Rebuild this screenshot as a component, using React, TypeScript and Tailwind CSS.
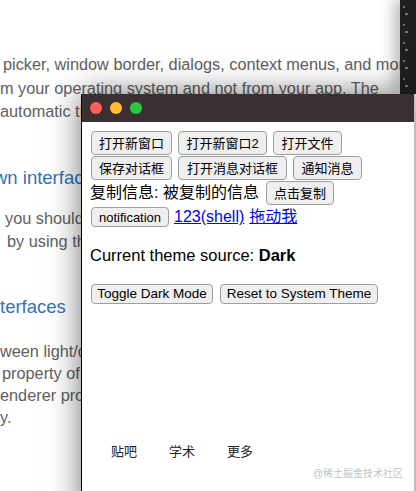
import React from "react"

const sans = "font-['Liberation_Sans','Noto_Sans_CJK_SC',sans-serif]"

function Btn({ w, h = "h-[24px]", size = "text-[13px]", children }: { w: string; h?: string; size?: string; children: React.ReactNode }) {
  return (
    <button
      className={`${w} ${h} ${size} shrink-0 rounded-[4px] border border-[#9e9e9e] bg-[#efefef] leading-none text-black flex items-center justify-center ${sans}`}
    >
      {children}
    </button>
  )
}

function DocsPage() {
  return (
    <div className={`flex flex-col text-[16.3px] text-[#606060] whitespace-nowrap ${sans}`}>
      <div className="h-[53px]" />
      <div className="leading-[23.5px] pl-[3px]">picker, window border, dialogs, context menus, and more</div>
      <div className="leading-[23.5px]">m your operating system and not from your app. The</div>
      <div className="leading-[23.5px]">automatic theme switching for the native interfaces</div>
      <div className="mt-[42px] text-[18.5px] leading-[24px] text-[#3572b7] -ml-[6px]">wn interfaces</div>
      <div className="mt-[17px] leading-[23px] pl-[5px]">you should also update your own interface</div>
      <div className="leading-[23px] pl-[7px]">by using the CSS media query</div>
      <div className="mt-[42px] text-[18.5px] leading-[24px] text-[#3572b7]">terfaces</div>
      <div className="mt-[21px] leading-[22px]">ween light/dark mode</div>
      <div className="leading-[22px] pl-[2px]">property of the module</div>
      <div className="leading-[22px]">enderer process</div>
      <div className="leading-[22px]">y.</div>
    </div>
  )
}

function EditorStrip() {
  const rows = [6, 13, 24, 31, 42, 49, 60, 67, 78, 85]
  return (
    <div className="absolute top-0 right-0 w-[16px] h-[94px] bg-[#1f1f1f] shadow-[-6px_0_14px_rgba(0,0,0,0.28)]">
      {rows.map((y, i) => (
        <span
          key={y}
          className={`absolute h-[2px] rounded-full bg-[#8a8a8a] ${i % 2 === 0 ? "left-[3px] w-[2px]" : "left-[5px] w-[3px]"}`}
          style={{ top: y }}
        />
      ))}
    </div>
  )
}

function ElectronWindow() {
  return (
    <div className="absolute left-[81px] top-[94px] w-[334px] h-[420px] flex flex-col bg-white border-l border-black border-r border-r-[#bdbdbd] shadow-[0_0_30px_rgba(0,0,0,0.55)]">
      <div className="h-[28px] shrink-0 bg-[#3b3031] flex items-center gap-[8px] pl-[8px]">
        <span className="w-[12px] h-[12px] rounded-full bg-[#fe5f57]" />
        <span className="w-[12px] h-[12px] rounded-full bg-[#febc2e]" />
        <span className="w-[12px] h-[12px] rounded-full bg-[#28c840]" />
      </div>

      <div className={`flex flex-col pt-[9px] pl-[9px] text-black ${sans}`}>
        <div className="flex gap-[6px]">
          <Btn w="w-[81px]">打开新窗口</Btn>
          <Btn w="w-[89px]">打开新窗口2</Btn>
          <Btn w="w-[69px]">打开文件</Btn>
        </div>
        <div className="flex gap-[6px] mt-[1px]">
          <Btn w="w-[81px]">保存对话框</Btn>
          <Btn w="w-[109px]">打开消息对话框</Btn>
          <Btn w="w-[69px]">通知消息</Btn>
        </div>
        <div className="flex items-center gap-[7px] mt-[1px] -ml-[1px]">
          <span className="text-[16px] leading-[20px]">复制信息: 被复制的信息</span>
          <Btn w="w-[68px]">点击复制</Btn>
        </div>
        <div className="flex items-center gap-[5px] mt-[2px] h-[20px]">
          <Btn w="w-[78px]" h="h-[20px]">notification</Btn>
          <a className="text-[16px] leading-[18px] text-[#0000ee] underline">123(shell)</a>
          <a className="text-[16px] leading-[18px] text-[#0000ee] underline">拖动我</a>
        </div>

        <p className="mt-[18px] -ml-[1px] text-[16.5px] leading-[20px]">
          Current theme source: <strong className="font-bold">Dark</strong>
        </p>

        <div className="flex gap-[7px] mt-[19px]">
          <Btn w="w-[122px]" h="h-[20px]" size="text-[13.5px]">Toggle Dark Mode</Btn>
          <Btn w="w-[158px]" h="h-[20px]" size="text-[13.5px]">Reset to System Theme</Btn>
        </div>

        <div className="flex gap-[32px] mt-[140px] pl-[20px] text-[13px] leading-[16px] text-[#222]">
          <span>贴吧</span>
          <span>学术</span>
          <span>更多</span>
        </div>
      </div>
    </div>
  )
}

export default function App() {
  return (
    <div className="relative w-[416px] h-[491px] overflow-hidden bg-white">
      <DocsPage />
      <EditorStrip />
      <ElectronWindow />
      <span className={`absolute right-[13px] bottom-[12px] text-[10px] leading-none text-[#c4c4c4] ${sans}`}>
        @稀土掘金技术社区
      </span>
    </div>
  )
}
